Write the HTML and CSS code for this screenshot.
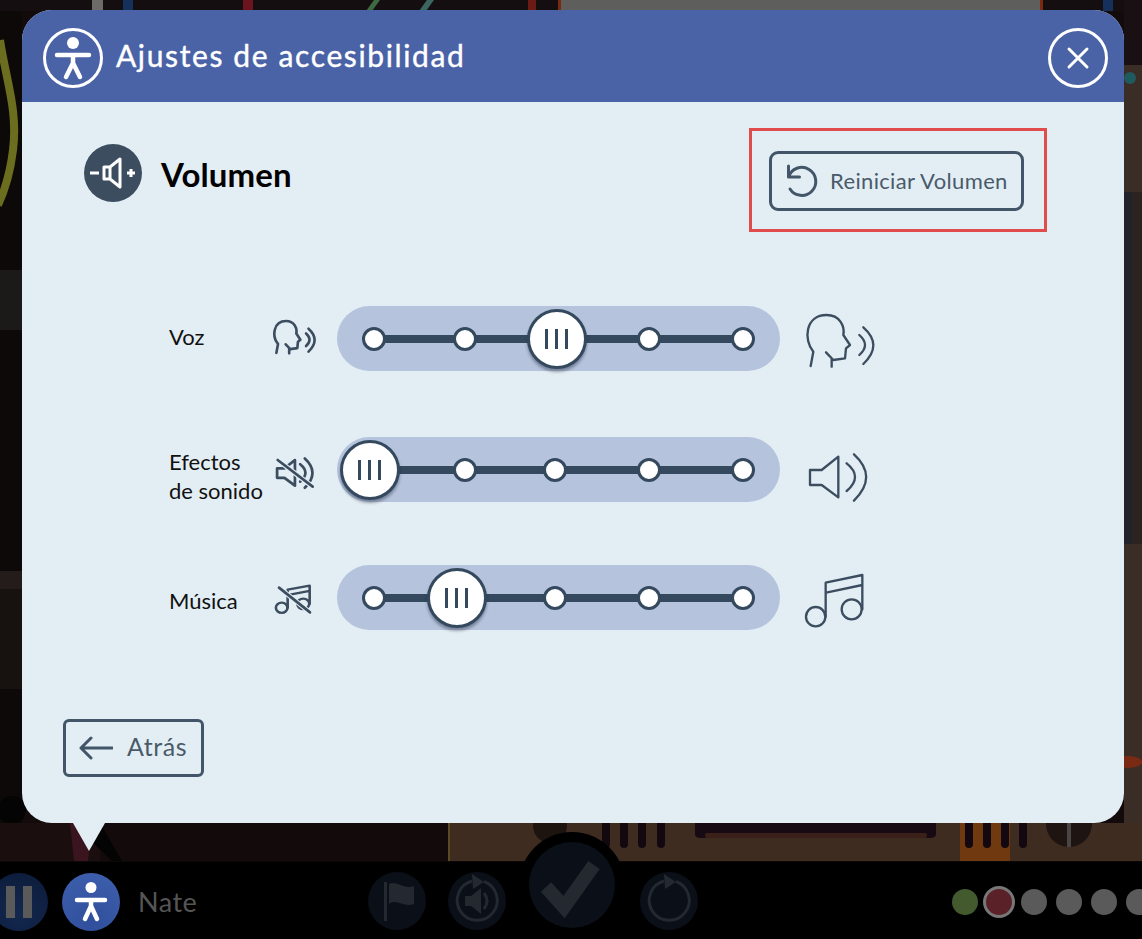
FILE: index.html
```html
<!DOCTYPE html>
<html lang="es">
<head>
<meta charset="utf-8">
<title>Ajustes de accesibilidad</title>
<link rel="stylesheet" href="styles.css">
</head>
<body>
<div class="stage">
  <main class="scene">
    <svg class="backdrop" viewBox="0 0 1142 861" width="1142" height="861" aria-hidden="true">
      <rect width="1142" height="861" fill="#120a0b"/>
      <rect x="0" y="0" width="22" height="861" fill="#0d0908"/>
      <rect x="0" y="0" width="1142" height="11" fill="#150e10"/>
      <rect x="92" y="0" width="11" height="11" fill="#6d6b68"/>
      <rect x="123" y="0" width="10" height="11" fill="#16305c"/>
      <rect x="243" y="0" width="10" height="11" fill="#6b1420"/>
      <path d="M366 11l8-11h6l-8 11z" fill="#3e6a42"/>
      <path d="M419 11l8-11h7l-8 11z" fill="#3b6660"/>
      <rect x="528" y="0" width="8" height="11" fill="#6b1a14"/>
      <rect x="558" y="0" width="3" height="11" fill="#7a2a10"/>
      <rect x="561" y="0" width="479" height="11" fill="#5e5e5c"/>
      <rect x="1040" y="0" width="3" height="11" fill="#7a2a10"/>
      <rect x="1103" y="0" width="10" height="11" fill="#16305c"/>
      <path d="M0 40C6 80 18 110 13 150C10 175 5 190 -2 205" fill="none" stroke="#6b6e1e" stroke-width="8"/>
      <rect x="0" y="270" width="22" height="60" fill="#1c1a19"/>
      <rect x="0" y="571" width="22" height="18" fill="#241c1a"/>
      <rect x="0" y="589" width="22" height="100" fill="#171110"/>
      <circle cx="12" cy="810" r="14" fill="#050404"/>
      <rect x="1124" y="60" width="18" height="801" fill="#3a2d26"/>
      <circle cx="1130" cy="78" r="6" fill="#1f5a5e"/>
      <rect x="1124" y="0" width="18" height="65" fill="#181012"/>
      <rect x="1124" y="192" width="8" height="352" fill="#22222a"/>
      <rect x="1132" y="192" width="10" height="352" fill="#2b2320"/>
      <ellipse cx="1128" cy="762" rx="14" ry="6" fill="#7a2a14"/>
      <rect x="0" y="823" width="100" height="38" fill="#1a0e0e"/>
      <path d="M70 823H92L88 861H74z" fill="#3a1520"/>
      <path d="M100 823L122 861H112L90 840z" fill="#050404"/>
      <rect x="448" y="823" width="694" height="38" fill="#3f2c20"/>
      <rect x="448" y="823" width="2" height="38" fill="#5c4a20"/>
      <circle cx="550" cy="826" r="17" fill="#1d1410"/>
      <g fill="#140810">
        <rect x="602" y="815" width="8" height="33" rx="4"/>
        <rect x="620" y="815" width="8" height="33" rx="4"/>
        <rect x="638" y="815" width="8" height="33" rx="4"/>
        <rect x="657" y="815" width="8" height="33" rx="4"/>
      </g>
      <path d="M695 815H936V834Q936 838 930 838H701Q695 838 695 834z" fill="#170a12"/>
      <rect x="705" y="833" width="222" height="5" rx="2" fill="#3a2018"/>
      <rect x="960" y="823" width="50" height="38" fill="#70390f"/>
      <g fill="#140810">
        <rect x="965" y="815" width="8" height="33" rx="4"/>
        <rect x="983" y="815" width="8" height="33" rx="4"/>
        <rect x="1001" y="815" width="8" height="33" rx="4"/>
        <rect x="1019" y="815" width="8" height="33" rx="4"/>
      </g>
      <circle cx="1069" cy="824" r="23" fill="#1e1412"/>
      <rect x="1067" y="823" width="4" height="24" fill="#4a4542"/>
    </svg>

    <section class="modal">
      <header class="modal-head">
        <div class="modal-title">
          <svg class="ring-icon" viewBox="0 0 60 60" width="60" height="60" aria-hidden="true">
            <circle cx="30" cy="30" r="28.5" class="ring"/>
            <circle cx="30" cy="15" r="6" class="fill-white"/>
            <path d="M14 27H46M30 27V35M30 35L23 49M30 35L37 49" class="figure"/>
          </svg>
          <h1 class="title-text">Ajustes de accesibilidad</h1>
        </div>
        <svg class="ring-icon" viewBox="0 0 60 60" width="60" height="60" aria-hidden="true">
          <circle cx="30" cy="30" r="28.5" class="ring"/>
          <path d="M21 21L39 39M39 21L21 39" class="figure figure--thin"/>
        </svg>
      </header>

      <div class="modal-body">
        <div class="section-head">
          <div class="section-title">
            <svg class="section-icon" viewBox="0 0 58 58" width="58" height="58" aria-hidden="true">
              <circle cx="29" cy="29" r="29" fill="#3d4d60"/>
              <path d="M6 29H15M20 23V35H26L36 43V15L26 23zM26 23V35M43 29H51M47 25V33" class="vol-lines"/>
            </svg>
            <h2 class="section-text">Volumen</h2>
          </div>
          <div class="highlight">
            <button class="outline-btn outline-btn--reset" type="button">
              <svg viewBox="0 0 34 34" width="34" height="34" aria-hidden="true">
                <path d="M3.5 2V13H14.5M3.5 13A14 14 0 1 1 5 25" class="btn-stroke"/>
              </svg>
              <span>Reiniciar Volumen</span>
            </button>
          </div>
        </div>

        <div class="rows">
          <div class="row">
            <div class="row-label">Voz</div>
            <svg class="small-icon" viewBox="366 48 180 195" width="60" height="65" aria-hidden="true">
              <g transform="translate(370 93) scale(.61 .625) translate(-767 -75)" class="sound-small">
                <path d="M782 228L790 185C760 150 765 75 830 75C870 75 885 110 880 135L900 165L888 175L885 205L850 210L828 187M845 205V230"/>
                <path d="M928 135Q962 165 928 195M940 112Q1000 165 940 222"/>
              </g>
            </svg>
            <div class="track">
              <span class="dot"></span><span class="dot"></span><span class="dot"></span><span class="dot"></span><span class="dot"></span>
              <div class="thumb" style="left:219.5px"><i></i><i></i><i></i></div>
            </div>
            <svg class="big-icon" viewBox="750 48 240 195" width="80" height="65" aria-hidden="true">
              <g class="sound-big">
                <path d="M782 228L790 185C760 150 765 75 830 75C870 75 885 110 880 135L900 165L888 175L885 205L850 210L828 187M845 205V230"/>
                <path d="M928 135Q962 165 928 195M940 112Q1000 165 940 222"/>
              </g>
            </svg>
          </div>

          <div class="row row--effects">
            <div class="row-label row-label--effects">Efectos<br>de sonido</div>
            <svg class="small-icon" viewBox="366 441 180 195" width="60" height="65" aria-hidden="true">
              <g transform="translate(380 505) scale(.63) translate(-778 -492)" class="sound-small">
                <path d="M780 540V585H815L865 622V500L815 540z"/>
                <path d="M890 520Q940 560 890 603M912 493Q985 560 912 632"/>
              </g>
              <path d="M383 510L488 590" class="slash-gap"/>
              <path d="M383 510L488 590" class="slash"/>
            </svg>
            <div class="track">
              <span class="dot"></span><span class="dot"></span><span class="dot"></span><span class="dot"></span><span class="dot"></span>
              <div class="thumb" style="left:32.5px"><i></i><i></i><i></i></div>
            </div>
            <svg class="big-icon" viewBox="750 441 240 195" width="80" height="65" aria-hidden="true">
              <g class="sound-big">
                <path d="M780 540V585H815L865 622V500L815 540z"/>
                <path d="M890 520Q940 560 890 603M912 493Q985 560 912 632"/>
              </g>
            </svg>
          </div>

          <div class="row row--music">
            <div class="row-label row-label--music">Música</div>
            <svg class="small-icon" viewBox="366 825 180 195" width="60" height="65" aria-hidden="true">
              <g transform="translate(377 887) scale(.6 .53) translate(-767 -855)" class="sound-small">
                <circle cx="797" cy="980" r="29"/>
                <circle cx="905" cy="958" r="30"/>
                <path d="M827 980V878L937 855V958M832 907L937 885"/>
              </g>
              <path d="M387 893L480 967" class="slash-gap"/>
              <path d="M387 893L480 967" class="slash"/>
            </svg>
            <div class="track">
              <span class="dot"></span><span class="dot"></span><span class="dot"></span><span class="dot"></span><span class="dot"></span>
              <div class="thumb" style="left:119.5px"><i></i><i></i><i></i></div>
            </div>
            <svg class="big-icon" viewBox="750 825 240 195" width="80" height="65" aria-hidden="true">
              <g class="sound-big">
                <circle cx="797" cy="980" r="29"/>
                <circle cx="905" cy="958" r="30"/>
                <path d="M827 980V878L937 855V958M832 907L937 885"/>
              </g>
            </svg>
          </div>
        </div>

        <button class="outline-btn outline-btn--back" type="button">
          <svg viewBox="0 0 34 24" width="34" height="24" aria-hidden="true">
            <path d="M33 12H2M12 2L2 12L12 22" class="btn-stroke"/>
          </svg>
          <span>Atrás</span>
        </button>
      </div>
    </section>
  </main>

  <footer class="bar">
    <div class="pause"><i></i><i></i></div>
    <svg class="access" viewBox="0 0 58 58" width="58" height="58" aria-hidden="true">
      <circle cx="29" cy="14.5" r="5.5" class="fill-white"/>
      <path d="M15 27H43M29 27V33M29 33L23 46M29 33L35 46" class="figure"/>
    </svg>
    <div class="name">Nate</div>
    <div class="tools">
      <svg class="tool" viewBox="0 0 58 58" width="58" height="58" aria-hidden="true">
        <rect x="16" y="10" width="3" height="39" fill="#23292f"/>
        <path d="M21 12C28 8 36 18 46 14V32C36 36 28 26 21 32z" fill="#23292f"/>
      </svg>
      <svg class="tool" viewBox="0 0 58 58" width="58" height="58" aria-hidden="true">
        <path d="M36 9.5A20 20 0 1 1 24 9" class="tool-stroke"/>
        <path d="M24 2L36 10L25 17z" fill="#23292f"/>
        <path d="M17 24H23L33 16V42L23 34H17z" fill="#23292f"/>
        <path d="M36 21Q42 29 36 37" class="tool-stroke"/>
      </svg>
      <svg class="tool tool--check" viewBox="0 0 86 86" width="86" height="86" aria-hidden="true">
        <path d="M17 45L35 65L65 23" class="check"/>
      </svg>
      <svg class="tool" viewBox="0 0 58 58" width="58" height="58" aria-hidden="true">
        <path d="M36 9.5A20 20 0 1 1 24 9" class="tool-stroke"/>
        <path d="M24 2L36 10L25 17z" fill="#23292f"/>
      </svg>
    </div>
    <div class="progress">
      <span class="pip pip--done"></span>
      <span class="pip pip--current"></span>
      <span class="pip"></span>
      <span class="pip"></span>
      <span class="pip"></span>
      <span class="pip"></span>
    </div>
  </footer>
</div>
</body>
</html>
```
FILE: styles.css
```css
* { box-sizing: border-box; }

html, body { margin: 0; padding: 0; background: #000; }

body { font-family: "Lato", "Open Sans", sans-serif; }

.stage {
  width: 1142px;
  height: 939px;
  display: flex;
  flex-direction: column;
  overflow: hidden;
}

.scene {
  position: relative;
  height: 861px;
  flex: none;
  padding: 10px 18px 0 22px;
}

.backdrop {
  position: absolute;
  left: 0;
  top: 0;
  display: block;
}

.modal {
  position: relative;
  height: 813px;
  display: flex;
  flex-direction: column;
  background: #e3eef4;
  border-radius: 30px;
}

.modal::after {
  content: "";
  position: absolute;
  left: 51px;
  bottom: -28px;
  border-style: solid;
  border-width: 28px 16.5px 0;
  border-color: #e3eef4 transparent transparent;
}

.modal-head {
  height: 92px;
  flex: none;
  display: flex;
  align-items: center;
  justify-content: space-between;
  padding: 3px 16px 0 21px;
  background: #4a62a6;
  border-radius: 30px 30px 0 0;
}

.modal-title { display: flex; align-items: center; gap: 13px; }

.ring-icon { display: block; flex: none; }

.ring { fill: none; stroke: #fff; stroke-width: 3; }

.fill-white { fill: #fff; }

.figure {
  fill: none;
  stroke: #fff;
  stroke-width: 4.5;
  stroke-linecap: round;
  stroke-linejoin: round;
}

.figure--thin { stroke-width: 3; }

.title-text {
  margin: 0 0 6px;
  font-size: 30px;
  font-weight: 400;
  letter-spacing: 1.62px;
  color: #fff;
  -webkit-text-stroke: 0.4px #fff;
}

.modal-body {
  flex: 1;
  display: flex;
  flex-direction: column;
  min-height: 0;
}

.section-head {
  display: flex;
  justify-content: space-between;
  align-items: flex-start;
  margin: 26px 77px 0 62px;
}

.section-title {
  display: flex;
  align-items: center;
  gap: 19px;
  margin-top: 16px;
}

.section-icon { display: block; flex: none; }

.vol-lines {
  fill: none;
  stroke: #fff;
  stroke-width: 3;
  stroke-linejoin: round;
}

.section-text {
  margin: 2px 0 0;
  font-size: 33px;
  font-weight: 700;
  letter-spacing: 0.1px;
  color: #000;
}

.highlight {
  width: 298px;
  height: 104px;
  border: 3px solid #e04b4b;
  padding: 20px 0 0 17px;
}

.outline-btn {
  display: flex;
  align-items: center;
  background: transparent;
  border-style: solid;
  border-color: #435568;
  color: #4a5a6a;
  font-family: inherit;
  padding: 0;
}

.outline-btn svg { display: block; flex: none; }

.outline-btn--reset {
  width: 255px;
  height: 60px;
  border-width: 3.5px;
  border-radius: 9px;
  padding-left: 13px;
  gap: 11px;
  font-size: 22px;
  letter-spacing: 0.35px;
}

.outline-btn--reset span { margin-bottom: 2px; }

.outline-btn--back {
  width: 141px;
  height: 58px;
  margin: auto 0 46px 41px;
  border-width: 3px;
  border-radius: 6px;
  padding-left: 13px;
  gap: 14px;
  font-size: 25px;
  letter-spacing: 0.6px;
}

.outline-btn--back span { margin-bottom: 4px; }

.btn-stroke {
  fill: none;
  stroke: #435568;
  stroke-width: 3;
  stroke-linecap: round;
  stroke-linejoin: round;
}

.rows { margin: 74px 0 0 147px; }

.row {
  display: flex;
  align-items: center;
  height: 65px;
}

.row--effects { margin-top: 66px; }

.row--music { margin-top: 63px; }

.row-label {
  width: 103px;
  flex: none;
  padding-bottom: 4px;
  font-size: 22px;
  line-height: 29px;
  color: #111;
}

.row-label--effects { padding: 12px 0 0; }

.row-label--music { padding: 5px 0 0; }

.small-icon { display: block; flex: none; margin-right: 5px; }

.big-icon { display: block; flex: none; margin-left: 20px; }

.sound-big, .sound-small {
  fill: none;
  stroke: #3d4d60;
  stroke-linecap: round;
  stroke-linejoin: round;
}

.sound-big { stroke-width: 7; }

.sound-small { stroke-width: 13; }

.slash-gap { stroke: #e3eef4; stroke-width: 15; }

.slash { stroke: #3d4d60; stroke-width: 8; stroke-linecap: round; }

.track {
  position: relative;
  width: 443px;
  height: 65px;
  flex: none;
  display: flex;
  align-items: center;
  padding: 0 25px;
  background: #b5c3dc;
  border-radius: 32.5px;
}

.track::before {
  content: "";
  position: absolute;
  left: 37px;
  right: 37px;
  top: 28.5px;
  height: 8px;
  background: #34495e;
}

.dot {
  position: relative;
  width: 24px;
  height: 24px;
  flex: none;
  background: #fff;
  border: 3px solid #34495e;
  border-radius: 50%;
}

.dot:nth-child(2) { margin-left: 67px; }
.dot:nth-child(3) { margin-left: 66px; }
.dot:nth-child(4) { margin-left: 70px; }
.dot:nth-child(5) { margin-left: 70px; }

.thumb {
  position: absolute;
  top: 50%;
  width: 60px;
  height: 60px;
  display: flex;
  align-items: center;
  justify-content: center;
  gap: 7.5px;
  transform: translate(-50%, -50%);
  background: #fff;
  border: 3px solid #34495e;
  border-radius: 50%;
  box-shadow: 0 3px 3px rgba(30, 40, 60, .4);
}

.thumb i {
  display: block;
  width: 2.5px;
  height: 20px;
  background: #34495e;
}

.bar {
  flex: 1;
  min-height: 0;
  display: flex;
  align-items: center;
  background: #000;
  border-top: 1px solid #0c0808;
  padding-top: 2px;
}

.pause {
  width: 58px;
  height: 58px;
  flex: none;
  margin-left: -10px;
  display: flex;
  align-items: center;
  justify-content: center;
  gap: 8px;
  background: radial-gradient(circle at 50% 70%, #13284f, #0c1a38);
  border-radius: 50%;
}

.pause i {
  display: block;
  width: 9px;
  height: 32px;
  background: #5a5a5a;
}

.access {
  display: block;
  flex: none;
  margin-left: 14px;
  background: radial-gradient(circle at 50% 85%, #2f4f9c, #3f60ae);
  border-radius: 50%;
}

.name {
  width: 230px;
  flex: none;
  margin-left: 18px;
  font-size: 27px;
  color: #555;
  letter-spacing: 0.5px;
}

.tools {
  display: flex;
  align-items: center;
  gap: 22px;
  flex: none;
  margin-top: -2px;
}

.tool {
  display: block;
  flex: none;
  background: #0a0f18;
  border-radius: 50%;
}

.tool--check {
  margin: 0 3px 0 1px;
  transform: translateY(-16px);
  box-shadow: 0 0 0 10px #000;
}

.tool-stroke {
  fill: none;
  stroke: #23292f;
  stroke-width: 3;
}

.check {
  fill: none;
  stroke: #23292f;
  stroke-width: 14;
}

.progress {
  display: flex;
  align-items: center;
  gap: 9px;
  flex: none;
  margin-left: 254px;
}

.pip {
  display: block;
  width: 26px;
  height: 26px;
  flex: none;
  background: #5a5a5a;
  border-radius: 50%;
}

.pip--done { background: #435a2e; }

.pip--current {
  width: 32px;
  height: 32px;
  margin: 0 -3px 0 -4px;
  background: #5a2228;
  border: 3px solid #777;
}
```
